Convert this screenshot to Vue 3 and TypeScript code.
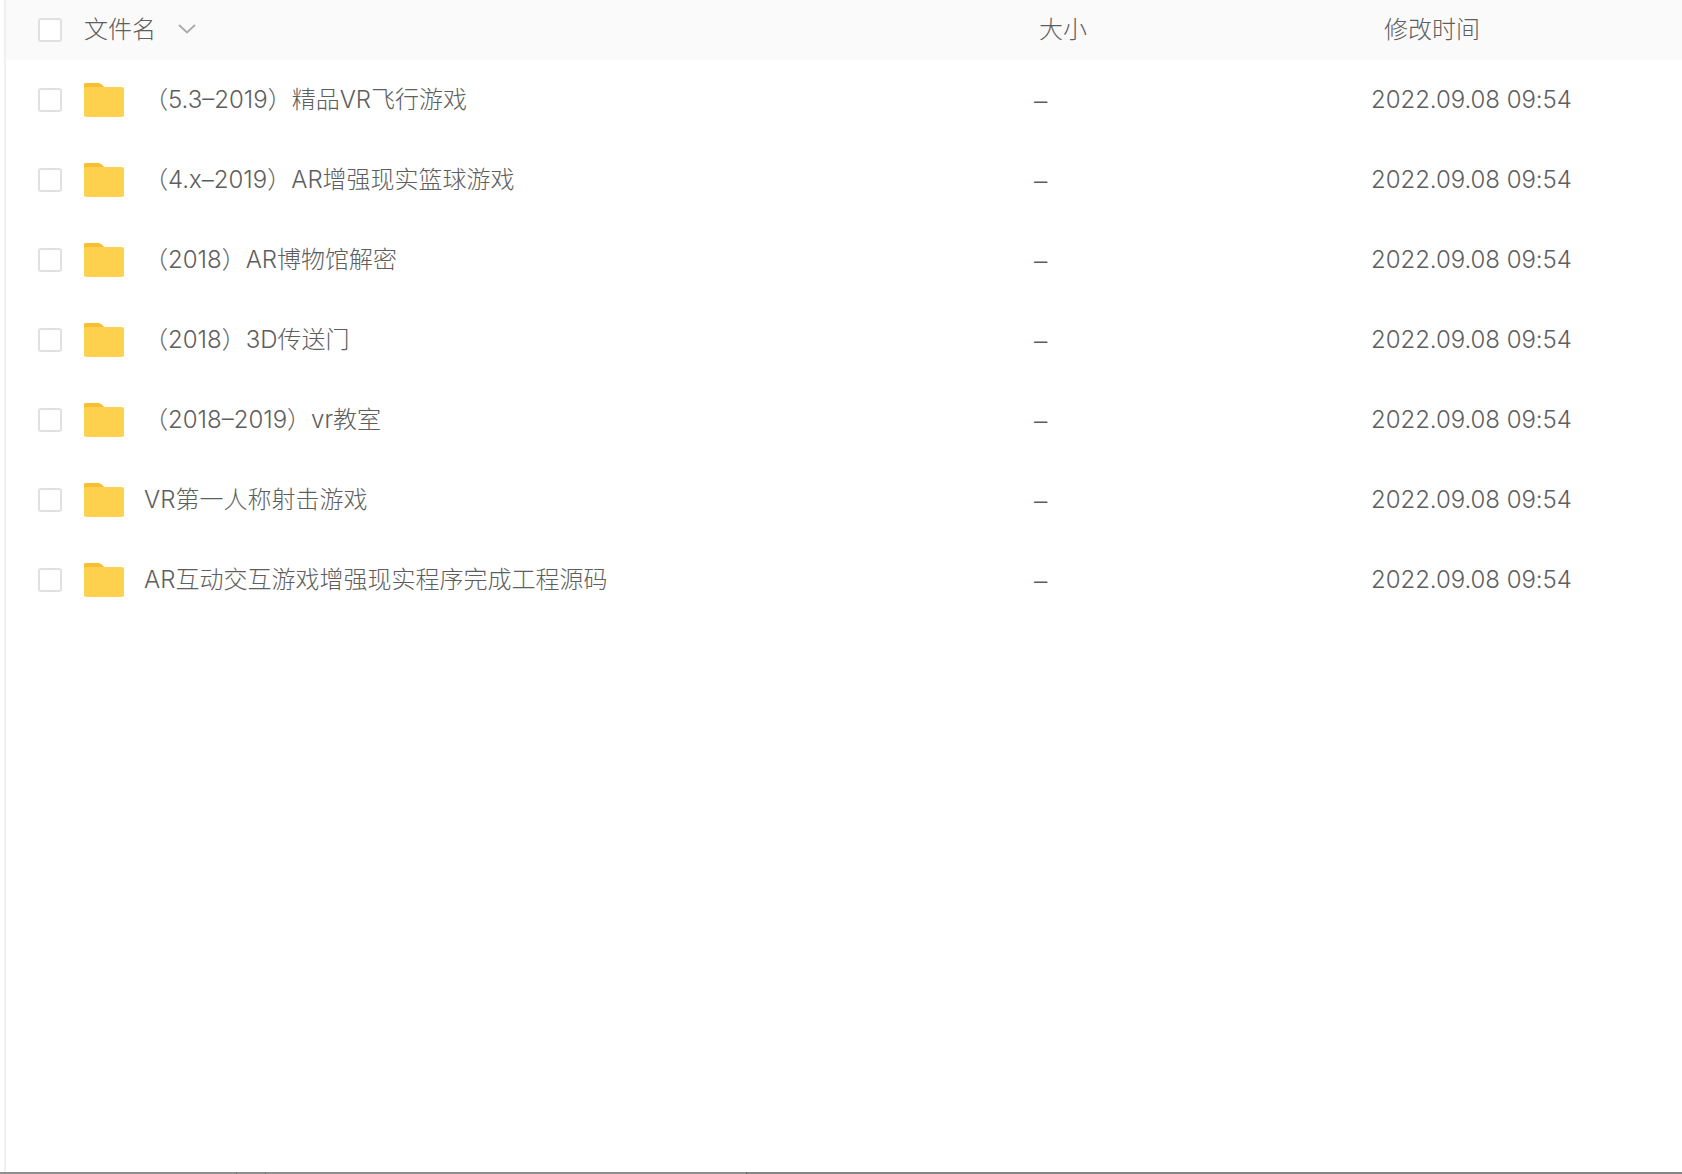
<script setup lang="ts">
interface Row { name: string }
const rows: Row[] = [
  { name: '（5.3–2019）精品VR飞行游戏' },
  { name: '（4.x–2019）AR增强现实篮球游戏' },
  { name: '（2018）AR博物馆解密' },
  { name: '（2018）3D传送门' },
  { name: '（2018–2019）vr教室' },
  { name: 'VR第一人称射击游戏' },
  { name: 'AR互动交互游戏增强现实程序完成工程源码' },
]
</script>

<template>
  <div class="page">
    <div class="table">
      <div class="head">
        <span class="check"></span>
        <div class="col-name head-name">
          <span class="label">文件名</span>
          <svg class="chevron" width="18" height="10" viewBox="0 0 18 10">
            <path d="M1 1 L9 8.5 L17 1" fill="none" stroke="#adadad" stroke-width="2" />
          </svg>
        </div>
        <div class="col-size head-size"><span class="label">大小</span></div>
        <div class="col-time head-time"><span class="label">修改时间</span></div>
      </div>
      <div v-for="row in rows" :key="row.name" class="row">
        <span class="check"></span>
        <svg class="folder" width="40" height="34" viewBox="0 0 40 34">
          <path d="M2 0 H14 Q16 0 17.5 1.5 L20 4 H38 Q40 4 40 6 V32 Q40 34 38 34 H2 Q0 34 0 32 V2 Q0 0 2 0 Z" fill="#fdd14d" />
          <path d="M2 0 H14 Q16 0 17.5 1.5 L20 4 H0 V2 Q0 0 2 0 Z" fill="#fabf2e" />
        </svg>
        <div class="col-name row-name">{{ row.name }}</div>
        <div class="col-size row-size">–</div>
        <div class="col-time row-time">2022.09.08 09:54</div>
      </div>
    </div>
    <div class="edge"></div>
  </div>
</template>

<style>
html, body { margin: 0; background: #fff; }
</style>

<style scoped>
.page {
  height: 1174px;
  display: flex;
  flex-direction: column;
  background: #fff;
  font-family: "Inter", "Noto Sans CJK SC", "Liberation Sans", sans-serif;
  font-weight: 300;
  color: #5e5e5e;
  font-size: 24px;
}
.table {
  margin-left: 4px;
  border-left: 2px solid #f0f0f0;
  flex: 1;
}
.head {
  height: 60px;
  background: #fafafa;
  display: flex;
  align-items: center;
  padding-left: 32px;
}
.label { display: block; line-height: 34px; margin-bottom: 1px; }
.row {
  height: 80px;
  display: flex;
  align-items: center;
  padding-left: 32px;
}
.check {
  width: 24px;
  height: 24px;
  box-sizing: border-box;
  border: 2px solid #e0e0e0;
  border-radius: 3px;
  background: #fff;
  flex: none;
}
.head-name {
  margin-left: 22px;
  width: 955px;
  display: flex;
  align-items: center;
  gap: 22px;
}
.chevron { margin-bottom: 2px; flex: none; }
.folder { margin-left: 22px; flex: none; }
.row-name { margin-left: 20px; width: 890px; white-space: nowrap; line-height: 34px; }
.head-size { width: 345px; }
.row-size { width: 337px; font-family: "Liberation Sans", sans-serif; }
.row-time { font-family: "Inter", sans-serif; letter-spacing: -0.05px; margin-bottom: 1px; }
.edge {
  height: 2px;
  flex: none;
  background: linear-gradient(to right,
    #8f8f8f 236px, #777 236px, #777 237px, #8f8f8f 237px,
    #8f8f8f 265px, #777 265px, #777 266px, #8f8f8f 266px,
    #8f8f8f 746px, #666 746px, #666 747px, #858585 747px);
}
</style>
